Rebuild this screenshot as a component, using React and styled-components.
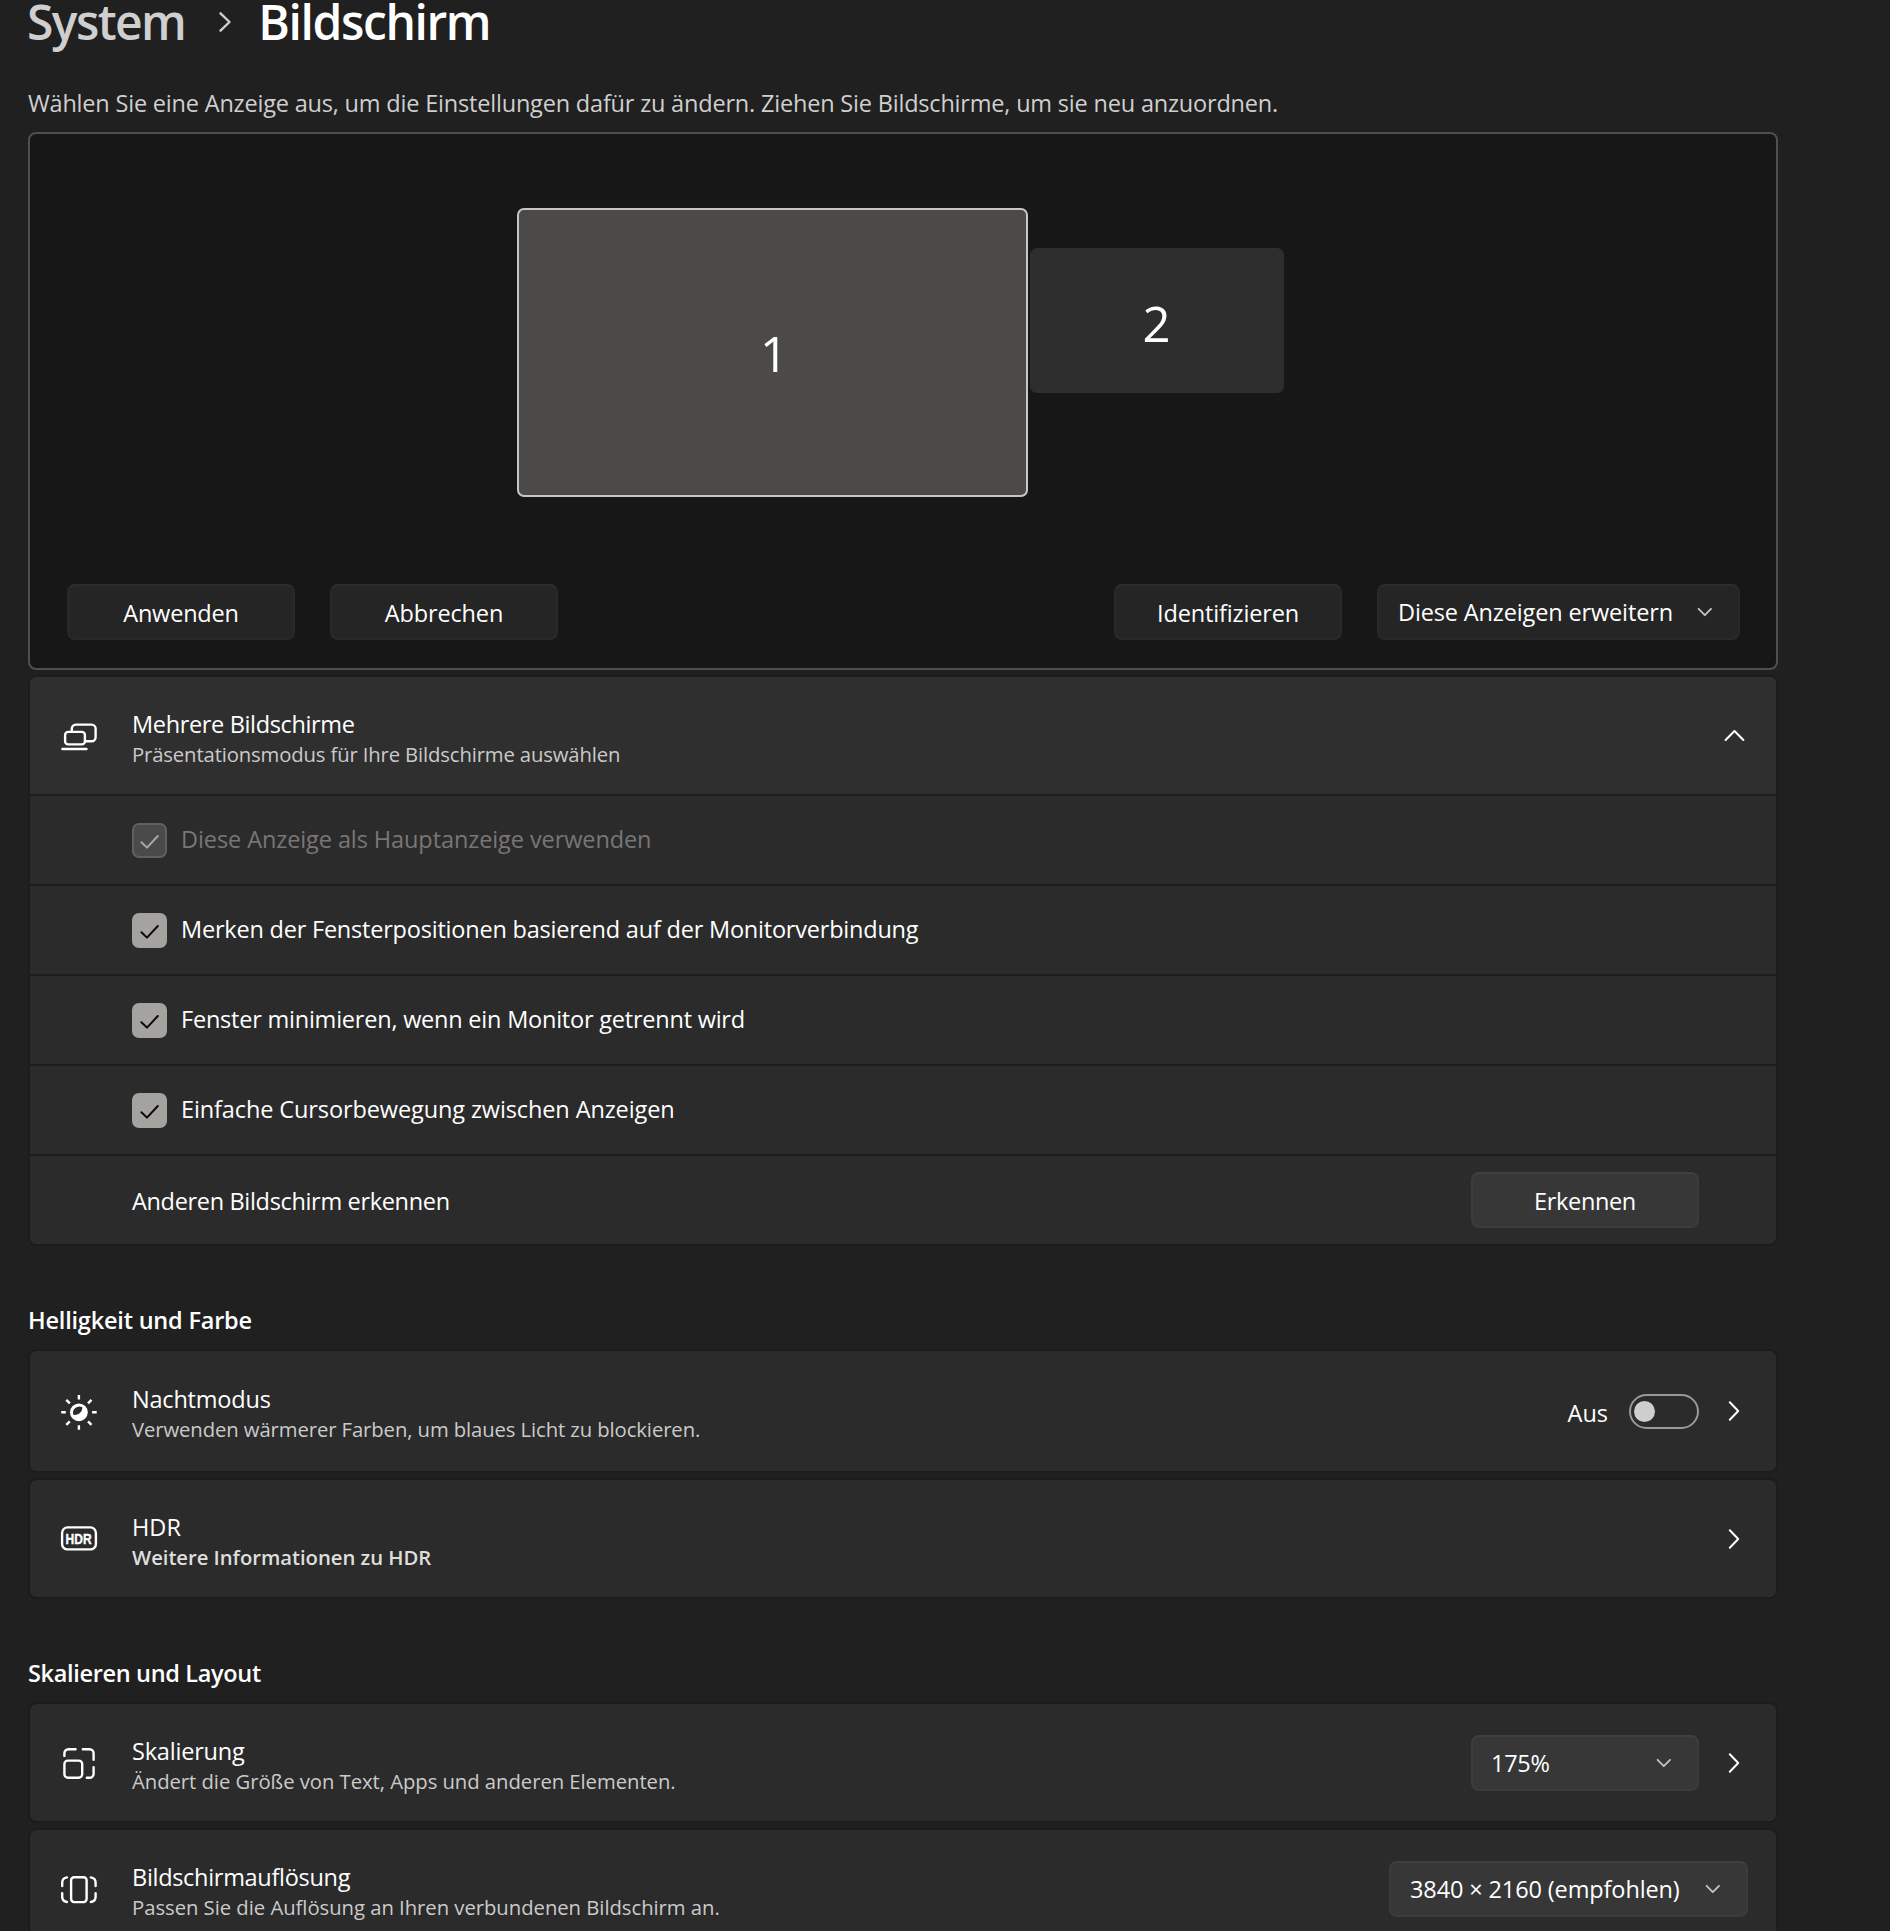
import styled, { createGlobalStyle } from 'styled-components';

const GlobalStyle = createGlobalStyle`
    * {
        box-sizing: border-box;
    }
    body {
        margin: 0;
        background: #202020;
        color: #fff;
        font-family: "Open Sans", "Noto Sans", sans-serif;
        font-size: 23.5px;
        overflow: hidden;
    }
`

const Page = styled.main`
    width: 100%;
    height: 100vh;
    padding-left: 28px;
    overflow: hidden;
`

const Content = styled.div`
    width: 1750px;
`

const Breadcrumb = styled.h1`
    display: flex;
    align-items: center;
    height: 43px;
    margin: 0;
    font-size: 48px;
    font-weight: 600;
    line-height: 43px;
    white-space: nowrap;
`

const Crumb = styled.span`
    margin-left: ${({ $current }) => ($current ? '0' : '-1px')};
    letter-spacing: ${({ $current }) => ($current ? '-1.4px' : '-1.6px')};
    color: ${({ $current }) => ($current ? '#fff' : '#cfcfcf')};
`

const CrumbArrow = styled.svg`
    width: 12px;
    height: 20px;
    margin: 1px 27px 0 34px;
    overflow: visible;
`

const Hint = styled.p`
    margin: 44px 0 13px;
    line-height: 32px;
    letter-spacing: -0.19px;
    color: #cfcfcf;
    white-space: nowrap;
`

const Arrangement = styled.section`
    position: relative;
    display: flex;
    align-items: flex-end;
    height: 538px;
    margin-bottom: 5px;
    padding: 0 36px 28px 37px;
    border: 2px solid #4f4f4f;
    border-radius: 8px;
    background: #171717;
`

const Monitor = styled.div`
    position: absolute;
    left: ${({ $x }) => $x}px;
    top: ${({ $y }) => $y}px;
    width: ${({ $w }) => $w}px;
    height: ${({ $h }) => $h}px;
    display: flex;
    align-items: center;
    justify-content: center;
    padding: ${({ $active }) => ($active ? '2px 0 0 3px' : '4px 0 0')};
    border: 2px solid ${({ $active }) => ($active ? '#c6c6c6' : '#2e2e2e')};
    border-radius: 7px;
    background: ${({ $active }) => ($active ? '#4b4a48' : '#2e2e2e')};
    font-size: 49px;
    line-height: 60px;
`

const ButtonGroup = styled.div`
    display: flex;
    gap: 35px;
    margin-left: ${({ $end }) => ($end ? 'auto' : '0')};
`

const Button = styled.button`
    display: flex;
    align-items: center;
    justify-content: center;
    flex: none;
    width: ${({ $w }) => $w || 228}px;
    height: 56px;
    padding: 1px 0 0;
    border: 2px solid ${({ $dark }) => ($dark ? '#292929' : '#3c3c3c')};
    border-top-color: ${({ $dark }) => ($dark ? '#2d2d2d' : '#404040')};
    border-radius: 8px;
    background: ${({ $dark }) => ($dark ? '#252525' : '#373737')};
    color: #fff;
    font: inherit;
    letter-spacing: ${({ $track }) => $track || 0}px;
    white-space: nowrap;
`

const Dropdown = styled(Button)`
    justify-content: space-between;
    padding: 0 26px 0 ${({ $pad }) => $pad || 18}px;
    margin-right: ${({ $shift }) => -$shift || 0}px;
`

const Card = styled.section`
    margin-bottom: 5px;
    border: 2px solid #1c1c1c;
    border-radius: 8px;
    background: #2b2b2b;
    background-clip: padding-box;
    overflow: hidden;
`

const CardHeader = styled.div`
    display: flex;
    align-items: center;
    height: ${({ $h }) => $h || 117}px;
    padding: 0 30px 0 31px;
    background: ${({ $raised }) => ($raised ? '#2f2f2f' : 'transparent')};
`

const RowIcon = styled.svg`
    flex: none;
    width: 36px;
    height: 36px;
    margin-right: 35px;
    overflow: visible;
    fill: none;
    stroke: #fff;
    stroke-width: 2.4;
    stroke-linecap: round;
    stroke-linejoin: round;
`

const Texts = styled.div`
    flex: 1;
    padding-top: ${({ $top }) => $top || 4}px;
    white-space: nowrap;
`

const Title = styled.div`
    line-height: 32px;
    letter-spacing: ${({ $track }) => $track || 0}px;
`

const Description = styled.div`
    font-size: 20.3px;
    font-weight: ${({ $link }) => ($link ? 600 : 400)};
    line-height: 28px;
    letter-spacing: ${({ $track }) => $track || 0}px;
    color: ${({ $link }) => ($link ? '#dededc' : '#cacaca')};
`

const Controls = styled.div`
    display: flex;
    align-items: center;
    gap: 23px;
`

const SubRow = styled.div`
    display: flex;
    align-items: center;
    height: 90px;
    padding: 0 77px 0 102px;
    border-top: 2px solid #1d1d1d;
    letter-spacing: ${({ $track }) => $track || 0}px;
    white-space: nowrap;
`

const SubLabel = styled.span`
    flex: 1;
    padding-top: 2px;
`

const Box = styled.svg`
    flex: none;
    width: 35px;
    height: 35px;
    margin: 1px 14px 0 0;
    border: 2px solid ${({ $disabled }) => ($disabled ? '#606060' : '#a5a39f')};
    border-radius: 7px;
    background: ${({ $disabled }) => ($disabled ? '#4a4a4a' : '#a5a39f')};
    fill: none;
    stroke: ${({ $disabled }) => ($disabled ? '#a8a8a8' : '#0a0a0a')};
    stroke-width: 2;
    stroke-linecap: round;
    stroke-linejoin: round;
`

const CheckLabel = styled.span`
    padding-bottom: 2px;
    color: ${({ $disabled }) => ($disabled ? '#777' : '#fff')};
`

const SectionTitle = styled.h2`
    margin: 58px 0 13px;
    font-size: 23.5px;
    font-weight: 600;
    line-height: 32px;
    letter-spacing: ${({ $track }) => $track || 0}px;
`

const ToggleText = styled.span`
    padding-top: 3px;
    margin-right: -2px;
`

const Toggle = styled.span`
    display: flex;
    align-items: center;
    width: 70px;
    height: 35px;
    margin-top: 1px;
    padding: 0 3px;
    border: 2px solid #999;
    border-radius: 18px;
`

const Knob = styled.span`
    width: 21px;
    height: 21px;
    border-radius: 50%;
    background: #cecece;
`

const Chevron = styled.svg`
    flex: none;
    width: 24px;
    height: 24px;
    fill: none;
    stroke: #fff;
    stroke-width: 2;
    stroke-linecap: round;
    stroke-linejoin: round;
`

const SmallChevron = styled.svg`
    flex: none;
    width: 14px;
    height: 8px;
    overflow: visible;
    fill: none;
    stroke: #c4c4c4;
    stroke-width: 1.8;
    stroke-linecap: round;
    stroke-linejoin: round;
`

const IconText = styled.text`
    font-family: "Liberation Sans", sans-serif;
    font-size: 14.6px;
    font-weight: bold;
    fill: #fff;
    stroke: #fff;
    stroke-width: 0.4;
`

const MultiDisplayIcon = () => (
    <RowIcon viewBox="0 0 36 36">
        <path d="M10.8 12.6V10.6a4 4 0 0 1 4-4h15.8a4 4 0 0 1 4 4v8.7a4 4 0 0 1-4 4h-6" />
        <rect x="4.1" y="13.9" width="19.8" height="12.5" rx="3" />
        <path d="M1.4 31H25.5" />
    </RowIcon>
)

const NightIcon = () => (
    <RowIcon viewBox="0 0 36 36">
        <circle cx="17.9" cy="19.3" r="8.9" fill="#fff" stroke="none" />
        <path d="M12.3 21.8A6.4 6.4 0 0 1 21.3 14.2C21.6 18.5 17.5 22.8 12.3 21.8Z" fill="#2b2b2b" stroke="none" />
        <path strokeLinecap="butt" d="M17.9 2v4.4M17.9 32.3v4.4M.2 19.3h4.6M31.1 19.3h4.6M5.3 6.8l3.5 3.5M30.5 6.8L27 10.3M5.3 31.8l3.5-3.5M30.5 31.8L27 28.3" />
    </RowIcon>
)

const HdrIcon = () => (
    <RowIcon viewBox="0 0 36 36">
        <rect x="1.1" y="6.4" width="33.8" height="22" rx="5.5" />
        <IconText x="4.6" y="22.6" textLength="26" lengthAdjust="spacingAndGlyphs">HDR</IconText>
    </RowIcon>
)

const ScaleIcon = () => (
    <RowIcon viewBox="0 0 36 36">
        <rect x="3.4" y="15.6" width="17.8" height="17.1" rx="3.5" />
        <path d="M3.4 10.9V8.2a4 4 0 0 1 4-4h7.2M21.8 4.2h6.8a4 4 0 0 1 4 4v6.6M32.6 22.2v6.5a4 4 0 0 1-4 4h-2.8" />
    </RowIcon>
)

const ResolutionIcon = () => (
    <RowIcon viewBox="0 0 36 36">
        <rect x="10.1" y="6.3" width="15.5" height="24.8" rx="3" />
        <path d="M6 6.4C3 6.7 1.2 8.7 1.2 11.7v3.3M1.2 22.3v3.5c0 2.9 1.8 4.9 4.8 5.2M29.8 6.4c3 .3 4.8 2.3 4.8 5.3v3.3M34.6 22.3v3.5c0 2.9-1.8 4.9-4.8 5.2" />
    </RowIcon>
)

const RightChevron = () => (
    <Chevron viewBox="0 0 24 24">
        <path d="M7.8 3.2l8.4 8.8-8.4 8.8" />
    </Chevron>
)

const UpChevron = () => (
    <Chevron viewBox="0 0 24 24">
        <path d="M3.6 16l8.9-9 8.9 9" />
    </Chevron>
)

const DownChevron = () => (
    <SmallChevron viewBox="0 0 14 8">
        <path d="M.6 .8L6.8 7.2l6.2-6.4" />
    </SmallChevron>
)

const checks = [
    { label: 'Diese Anzeige als Hauptanzeige verwenden', disabled: true, track: -0.09 },
    { label: 'Merken der Fensterpositionen basierend auf der Monitorverbindung', track: -0.21 },
    { label: 'Fenster minimieren, wenn ein Monitor getrennt wird', track: -0.22 },
    { label: 'Einfache Cursorbewegung zwischen Anzeigen', track: -0.11 },
]

const CheckRow = ({ item }) => (
    <SubRow $track={item.track}>
        <Box viewBox="0 0 31 31" $disabled={item.disabled}>
            <path d="M7.4 17.2l5.6 5.4L23.8 11" />
        </Box>
        <CheckLabel $disabled={item.disabled}>{item.label}</CheckLabel>
    </SubRow>
)

const App = () => {
    return (
        <Page>
            <GlobalStyle />
            <Content>
                <Breadcrumb>
                    <Crumb>System</Crumb>
                    <CrumbArrow viewBox="0 0 12 20" fill="none" stroke="#cfcfcf" strokeWidth="2.4" strokeLinecap="round" strokeLinejoin="round">
                        <path d="M1.5 1.3L10.5 10l-9 8.7" />
                    </CrumbArrow>
                    <Crumb $current>Bildschirm</Crumb>
                </Breadcrumb>
                <Hint>Wählen Sie eine Anzeige aus, um die Einstellungen dafür zu ändern. Ziehen Sie Bildschirme, um sie neu anzuordnen.</Hint>

                <Arrangement>
                    <Monitor $x={487} $y={73.5} $w={511} $h={289.5} $active>1</Monitor>
                    <Monitor $x={999.6} $y={114} $w={254} $h={145}>2</Monitor>
                    <ButtonGroup>
                        <Button $dark $track={-0.2}>Anwenden</Button>
                        <Button $dark $track={-0.15}>Abbrechen</Button>
                    </ButtonGroup>
                    <ButtonGroup $end>
                        <Button $dark $track={-0.15}>Identifizieren</Button>
                        <Dropdown $dark $w={363} $pad={19} $track={-0.14}>
                            Diese Anzeigen erweitern
                            <DownChevron />
                        </Dropdown>
                    </ButtonGroup>
                </Arrangement>

                <Card>
                    <CardHeader $raised>
                        <MultiDisplayIcon />
                        <Texts>
                            <Title $track={-0.35}>Mehrere Bildschirme</Title>
                            <Description $track={-0.14}>Präsentationsmodus für Ihre Bildschirme auswählen</Description>
                        </Texts>
                        <UpChevron />
                    </CardHeader>
                    {checks.map((item) => (
                        <CheckRow item={item} key={item.label} />
                    ))}
                    <SubRow $track={-0.33}>
                        <SubLabel>Anderen Bildschirm erkennen</SubLabel>
                        <Button $track={-0.35}>Erkennen</Button>
                    </SubRow>
                </Card>

                <SectionTitle $track={-0.2}>Helligkeit und Farbe</SectionTitle>
                <Card>
                    <CardHeader $h={120}>
                        <NightIcon />
                        <Texts $top={3}>
                            <Title $track={-0.2}>Nachtmodus</Title>
                            <Description $track={-0.1}>Verwenden wärmerer Farben, um blaues Licht zu blockieren.</Description>
                        </Texts>
                        <Controls>
                            <ToggleText>Aus</ToggleText>
                            <Toggle><Knob /></Toggle>
                            <RightChevron />
                        </Controls>
                    </CardHeader>
                </Card>
                <Card>
                    <CardHeader>
                        <HdrIcon />
                        <Texts>
                            <Title>HDR</Title>
                            <Description $link $track={-0.04}>Weitere Informationen zu HDR</Description>
                        </Texts>
                        <RightChevron />
                    </CardHeader>
                </Card>

                <SectionTitle $track={-0.33}>Skalieren und Layout</SectionTitle>
                <Card>
                    <CardHeader>
                        <ScaleIcon />
                        <Texts>
                            <Title $track={-0.2}>Skalierung</Title>
                            <Description $track={-0.05}>Ändert die Größe von Text, Apps und anderen Elementen.</Description>
                        </Texts>
                        <Controls>
                            <Dropdown $track={-0.3}>
                                175%
                                <DownChevron />
                            </Dropdown>
                            <RightChevron />
                        </Controls>
                    </CardHeader>
                </Card>
                <Card>
                    <CardHeader>
                        <ResolutionIcon />
                        <Texts>
                            <Title $track={-0.3}>Bildschirmauflösung</Title>
                            <Description $track={-0.04}>Passen Sie die Auflösung an Ihren verbundenen Bildschirm an.</Description>
                        </Texts>
                        <Dropdown $w={359} $pad={19} $shift={2} $track={-0.12}>
                            3840 × 2160 (empfohlen)
                            <DownChevron />
                        </Dropdown>
                    </CardHeader>
                </Card>
            </Content>
        </Page>
    )
}

export default App;
